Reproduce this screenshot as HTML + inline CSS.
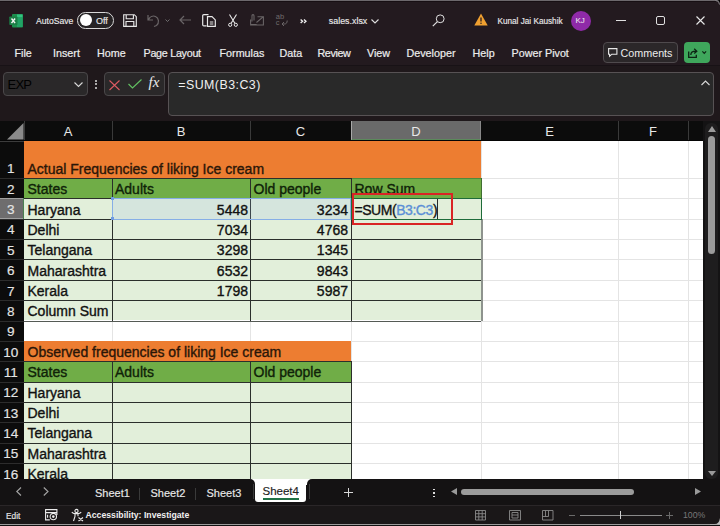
<!DOCTYPE html>
<html><head><meta charset="utf-8">
<style>
*{box-sizing:border-box;margin:0;padding:0}
html,body{width:720px;height:526px;overflow:hidden;background:#231a1f}
body{position:relative;font-family:"Liberation Sans",sans-serif;color:#e6e6e6}
.a{position:absolute}
.t{position:absolute;white-space:nowrap;line-height:1}
svg{position:absolute;overflow:visible}
</style></head><body>

<!-- top border -->
<div class="a" style="left:0;top:0;width:720px;height:1px;background:#6c686c"></div>
<div class="a" style="left:0;top:1px;width:720px;height:1px;background:#170f13"></div>
<svg style="left:712px;top:0" width="8" height="8" viewBox="0 0 8 8"><path d="M4 0H8V4Q8 0 4 0z" fill="#000"/><path d="M3.5 0.5Q7.5 0.5 7.5 4.5" fill="none" stroke="#8a868a" stroke-width="1"/></svg>

<!-- ===== TITLE BAR ===== -->
<svg style="left:9px;top:13.5px" width="14" height="13.5" viewBox="0 0 14 13.5">
<rect x="3" y="0" width="11" height="13.5" rx="1" fill="#1d8f4e"/>
<rect x="8" y="0.5" width="5.5" height="3" fill="#33c481"/>
<rect x="8" y="3.5" width="5.5" height="9.5" fill="#21a366"/>
<rect x="0.3" y="2.5" width="8.2" height="8.5" rx="0.8" fill="#1b7f46"/>
<path d="M2.5 4.5l3.6 4.6M6.1 4.5l-3.6 4.6" stroke="#f4f4f4" stroke-width="1.4"/>
</svg>
<div class="t" style="left:36px;top:16.8px;font-size:8.6px;color:#e8e8e8;-webkit-text-stroke:0.15px #e8e8e8">AutoSave</div>
<div class="a" style="left:77px;top:12px;width:36.5px;height:16.8px;border:1px solid #d8d8d8;border-radius:8.4px;background:#262325"></div>
<div class="a" style="left:79.8px;top:14px;width:12px;height:12px;background:#fff;border-radius:50%"></div>
<div class="t" style="left:96px;top:16.6px;font-size:9px;color:#e8e8e8;-webkit-text-stroke:0.15px #e8e8e8">Off</div>

<!-- save -->
<svg style="left:123.3px;top:14px" width="14" height="13" viewBox="0 0 14 13"><path d="M0.7 0.7h10.6l2 2v9.6h-12.6z M3.2 0.7v4h7.2v-4 M3 12.3v-4.8h7.8v4.8" fill="none" stroke="#e6e6e6" stroke-width="1.15"/></svg>
<!-- undo dim -->
<svg style="left:147px;top:14px" width="14" height="13" viewBox="0 0 14 13"><path d="M1 1v5h5 M1.5 5.5C3 2.5 6 1.5 8.5 2.5 12 4 12.5 9 9.5 11.5 L7 12.5" fill="none" stroke="#6a6567" stroke-width="1.2"/></svg>
<svg style="left:165px;top:19px" width="5" height="3" viewBox="0 0 5 3"><path d="M0.5 0.5l2 2 2-2" fill="none" stroke="#777" stroke-width="0.9"/></svg>
<!-- back arrow -->
<svg style="left:179px;top:15px" width="12" height="10" viewBox="0 0 12 10"><path d="M12 5H1 M5 1L1 5l4 4" fill="none" stroke="#6a6567" stroke-width="1.2"/></svg>
<!-- copy -->
<svg style="left:202px;top:14px" width="14" height="13" viewBox="0 0 14 13"><path d="M6.5 0.7H1.8Q0.7 0.7 0.7 1.8V10.7Q0.7 11.8 1.8 11.8H4.5 M5.5 2.6h4.5l3.3 3.3v6.4h-7.8z M7.8 8h3.5 M7.8 10h3.5" fill="none" stroke="#e8e8e8" stroke-width="1.2"/></svg>
<!-- scissors -->
<svg style="left:228px;top:14px" width="10" height="13" viewBox="0 0 10 13"><path d="M1.5 0.5L7 9.5 M8.5 0.5L3 9.5" fill="none" stroke="#e8e8e8" stroke-width="1.1"/><circle cx="2.2" cy="10.8" r="1.6" fill="none" stroke="#e8e8e8" stroke-width="1"/><circle cx="7.8" cy="10.8" r="1.6" fill="none" stroke="#e8e8e8" stroke-width="1"/></svg>
<!-- disabled format painter-ish -->
<svg style="left:249.5px;top:13.5px" width="14" height="11.5" viewBox="0 0 14 11.5"><path d="M0.6 5.5v5.4h12.8V2.8H7.5 M6.5 8.5L12.8 3.2 M2 7.5V1.8Q2 0.6 3 0.6T4 1.8V6.5 M0.6 10.5h6" fill="none" stroke="#6a6567" stroke-width="1.05"/></svg>
<!-- ab icon -->
<div class="t" style="left:275.8px;top:14px;font-size:7.5px;color:#6f6a6c;line-height:5.5px">ab<br>c</div>
<svg style="left:281px;top:19.5px" width="7" height="7" viewBox="0 0 7 7"><path d="M6.2 0.5c0 2.5-1 3.5-3 3.5H1 M3 2L1 4l2 2" fill="none" stroke="#6a6567" stroke-width="1"/></svg>
<svg style="left:300.3px;top:18.8px" width="7" height="4.6" viewBox="0 0 7 4.6"><path d="M0.6 0.5l2 1.8-2 1.8 M4 0.5l2 1.8-2 1.8" fill="none" stroke="#f0f0f0" stroke-width="1.3"/></svg>

<div class="t" style="left:328.8px;top:16.5px;font-size:8.9px;color:#e8e8e8;-webkit-text-stroke:0.15px #e8e8e8">sales.xlsx</div>
<svg style="left:371px;top:18.5px" width="8" height="5" viewBox="0 0 8 5"><path d="M0.5 0.5l3.5 3.5 3.5-3.5" fill="none" stroke="#e0e0e0" stroke-width="1.1"/></svg>

<!-- search -->
<svg style="left:432px;top:14px" width="13" height="13" viewBox="0 0 13 13"><circle cx="8.2" cy="4.8" r="3.9" fill="none" stroke="#e0e0e0" stroke-width="1"/><path d="M5.4 7.6L0.8 12.2" stroke="#e0e0e0" stroke-width="1.2"/></svg>
<!-- warning -->
<svg style="left:474px;top:13px" width="14" height="13" viewBox="0 0 14 13"><path d="M7 0.5L13.7 12.5H0.3z" fill="#f0a030"/><path d="M7 4.5v4" stroke="#221b1f" stroke-width="1.3"/><circle cx="7" cy="10.3" r="0.75" fill="#221b1f"/></svg>
<div class="t" style="left:497.5px;top:17.6px;font-size:8.2px;color:#e8e8e8;-webkit-text-stroke:0.15px #e8e8e8">Kunal Jai Kaushik</div>
<div class="a" style="left:571px;top:10.5px;width:20px;height:20px;border-radius:50%;background:#8f2aa8"></div>
<div class="t" style="left:575.5px;top:16.5px;font-size:8px;color:#f0f0f0">KJ</div>

<!-- window controls -->
<div class="a" style="left:616px;top:20px;width:10px;height:1px;background:#e0e0e0"></div>
<div class="a" style="left:656px;top:16px;width:9px;height:9px;border:1px solid #e0e0e0;border-radius:2px"></div>
<svg style="left:696px;top:16px" width="9" height="9" viewBox="0 0 9 9"><path d="M0.5 0.5l8 8M8.5 0.5l-8 8" stroke="#e8e8e8" stroke-width="1.1"/></svg>

<!-- ===== TABS ROW ===== -->
<div class="t" style="left:14.5px;top:48.3px;font-size:10.75px;color:#ececec;-webkit-text-stroke:0.2px #ececec">File</div>
<div class="t" style="left:53px;top:48.3px;font-size:10.75px;color:#ececec;-webkit-text-stroke:0.2px #ececec">Insert</div>
<div class="t" style="left:97px;top:48.3px;font-size:10.75px;color:#ececec;-webkit-text-stroke:0.2px #ececec">Home</div>
<div class="t" style="left:143.5px;top:48.3px;font-size:10.75px;letter-spacing:-0.28px;color:#ececec;-webkit-text-stroke:0.2px #ececec">Page Layout</div>
<div class="t" style="left:219.5px;top:48.3px;font-size:10.75px;color:#ececec;-webkit-text-stroke:0.2px #ececec">Formulas</div>
<div class="t" style="left:279.5px;top:48.3px;font-size:10.75px;color:#ececec;-webkit-text-stroke:0.2px #ececec">Data</div>
<div class="t" style="left:317.5px;top:48.3px;font-size:10.75px;letter-spacing:-0.4px;color:#ececec;-webkit-text-stroke:0.2px #ececec">Review</div>
<div class="t" style="left:367px;top:48.3px;font-size:10.75px;color:#ececec;-webkit-text-stroke:0.2px #ececec">View</div>
<div class="t" style="left:406.5px;top:48.3px;font-size:10.75px;color:#ececec;-webkit-text-stroke:0.2px #ececec">Developer</div>
<div class="t" style="left:472.5px;top:48.3px;font-size:10.75px;color:#ececec;-webkit-text-stroke:0.2px #ececec">Help</div>
<div class="t" style="left:511.5px;top:48.3px;font-size:10.75px;color:#ececec;-webkit-text-stroke:0.2px #ececec">Power Pivot</div>

<div class="a" style="left:603px;top:42px;width:75px;height:21px;border:1px solid #4f4a4d;border-radius:4px;background:#2b2729"></div>
<svg style="left:607.8px;top:47.8px" width="9.5" height="9" viewBox="0 0 9.5 9"><path d="M0.6 0.6h8.3v5.6H3.8L1.6 8.3V6.2H0.6z" fill="none" stroke="#e8e8e8" stroke-width="1.1"/></svg>
<div class="t" style="left:620.5px;top:47.9px;font-size:10.75px;color:#ececec">Comments</div>

<div class="a" style="left:684px;top:42px;width:26px;height:20.5px;border-radius:4px;background:#3fa75c"></div>
<svg style="left:688px;top:47.5px" width="10" height="10" viewBox="0 0 10 10"><path d="M0.7 3.5v5.8h7.6v-2.5 M2.8 7c0-2.6 2-3.8 5-3.8 M6.2 0.8l2.6 2.4-2.6 2.4" fill="none" stroke="#0d2414" stroke-width="1.3"/></svg>
<svg style="left:702px;top:51px" width="4.5" height="3" viewBox="0 0 4.5 3"><path d="M0.4 0.4l1.85 1.9 1.85-1.9" fill="none" stroke="#0d2414" stroke-width="1.2"/></svg>

<!-- separator -->
<div class="a" style="left:0;top:65px;width:720px;height:1px;background:#181216"></div>
<div class="a" style="left:0;top:66px;width:720px;height:55px;background:#1f181b"></div>

<!-- ===== FORMULA BAR ===== -->
<div class="a" style="left:3px;top:71.5px;width:84.5px;height:24.5px;border:1px solid #4a4749;border-radius:4px;background:#2a2829"></div>
<div class="t" style="left:7.5px;top:77.7px;font-size:13px;letter-spacing:-0.75px;color:#000">EXP</div>
<svg style="left:74px;top:82px" width="9" height="5" viewBox="0 0 9 5"><path d="M0.5 0.5l4 4 4-4" fill="none" stroke="#d8d8d8" stroke-width="1.1"/></svg>
<div class="a" style="left:95px;top:79.5px;width:2px;height:2px;background:#ddd;border-radius:1px"></div>
<div class="a" style="left:95px;top:83px;width:2px;height:2px;background:#ddd;border-radius:1px"></div>
<div class="a" style="left:95px;top:86.5px;width:2px;height:2px;background:#ddd;border-radius:1px"></div>

<div class="a" style="left:103.5px;top:71.5px;width:61.5px;height:24.5px;border:1px solid #4a4749;border-radius:4px;background:#2a2829"></div>
<svg style="left:109px;top:79.5px" width="11" height="10" viewBox="0 0 11 10"><path d="M0.5 0.5l10 9.5M10.5 0.5l-10 9.5" stroke="#de5a62" stroke-width="1.05"/></svg>
<svg style="left:127.5px;top:78.5px" width="14" height="10" viewBox="0 0 14 10"><path d="M0.5 5l4 4L13.5 0.5" fill="none" stroke="#62c062" stroke-width="1.15"/></svg>
<div class="t" style="left:148.5px;top:75px;font-size:15px;color:#ececec;font-family:'Liberation Serif',serif;font-style:italic">fx</div>

<div class="a" style="left:168px;top:72px;width:546px;height:44px;border:1px solid #575254;border-radius:4px;background:#292929"></div>
<div class="t" style="left:178.3px;top:78.5px;font-size:12.4px;letter-spacing:0.45px;color:#f0f0f0">=SUM(B3:C3)</div>
<svg style="left:701px;top:79.5px" width="9" height="5.5" viewBox="0 0 9 5.5"><path d="M0.5 5l4-4 4 4" fill="none" stroke="#dadada" stroke-width="1.1"/></svg>

<!-- ===== GRID ===== -->
<!-- scrollbar -->
<div class="a" style="left:703px;top:121px;width:17px;height:358px;background:#141314"></div>
<div class="a" style="left:0.00px;top:141.00px;width:703.00px;height:338.00px;background:#fff"></div>
<div class="a" style="left:112.00px;top:141.00px;width:1.00px;height:338.00px;background:#e4e4e4"></div>
<div class="a" style="left:250.00px;top:141.00px;width:1.00px;height:338.00px;background:#e4e4e4"></div>
<div class="a" style="left:351.00px;top:141.00px;width:1.00px;height:338.00px;background:#e4e4e4"></div>
<div class="a" style="left:481.00px;top:141.00px;width:1.00px;height:338.00px;background:#e4e4e4"></div>
<div class="a" style="left:618.00px;top:141.00px;width:1.00px;height:338.00px;background:#e4e4e4"></div>
<div class="a" style="left:688.00px;top:141.00px;width:1.00px;height:338.00px;background:#e4e4e4"></div>
<div class="a" style="left:24.00px;top:178.00px;width:679.00px;height:1.00px;background:#e4e4e4"></div>
<div class="a" style="left:24.00px;top:198.36px;width:679.00px;height:1.00px;background:#e4e4e4"></div>
<div class="a" style="left:24.00px;top:218.71px;width:679.00px;height:1.00px;background:#e4e4e4"></div>
<div class="a" style="left:24.00px;top:239.07px;width:679.00px;height:1.00px;background:#e4e4e4"></div>
<div class="a" style="left:24.00px;top:259.43px;width:679.00px;height:1.00px;background:#e4e4e4"></div>
<div class="a" style="left:24.00px;top:279.78px;width:679.00px;height:1.00px;background:#e4e4e4"></div>
<div class="a" style="left:24.00px;top:300.14px;width:679.00px;height:1.00px;background:#e4e4e4"></div>
<div class="a" style="left:24.00px;top:320.50px;width:679.00px;height:1.00px;background:#e4e4e4"></div>
<div class="a" style="left:24.00px;top:340.86px;width:679.00px;height:1.00px;background:#e4e4e4"></div>
<div class="a" style="left:24.00px;top:361.21px;width:679.00px;height:1.00px;background:#e4e4e4"></div>
<div class="a" style="left:24.00px;top:381.57px;width:679.00px;height:1.00px;background:#e4e4e4"></div>
<div class="a" style="left:24.00px;top:401.93px;width:679.00px;height:1.00px;background:#e4e4e4"></div>
<div class="a" style="left:24.00px;top:422.28px;width:679.00px;height:1.00px;background:#e4e4e4"></div>
<div class="a" style="left:24.00px;top:442.64px;width:679.00px;height:1.00px;background:#e4e4e4"></div>
<div class="a" style="left:24.00px;top:463.00px;width:679.00px;height:1.00px;background:#e4e4e4"></div>
<div class="a" style="left:24.00px;top:141.00px;width:457.00px;height:37.00px;background:#ed7d31"></div>
<div class="a" style="left:24.00px;top:178.00px;width:457.00px;height:20.36px;background:#70ad47"></div>
<div class="a" style="left:24.00px;top:198.36px;width:457.00px;height:122.14px;background:#e2efda"></div>
<div class="a" style="left:24.00px;top:340.86px;width:327.00px;height:20.36px;background:#ed7d31"></div>
<div class="a" style="left:24.00px;top:361.21px;width:327.00px;height:20.36px;background:#70ad47"></div>
<div class="a" style="left:24.00px;top:381.57px;width:327.00px;height:97.43px;background:#e2efda"></div>
<div class="a" style="left:24.00px;top:178.00px;width:327.00px;height:1.00px;background:#2b2f2b"></div>
<div class="a" style="left:24.00px;top:198.36px;width:457.00px;height:1.00px;background:#2b2f2b"></div>
<div class="a" style="left:24.00px;top:218.71px;width:457.00px;height:1.00px;background:#2b2f2b"></div>
<div class="a" style="left:24.00px;top:239.07px;width:457.00px;height:1.00px;background:#2b2f2b"></div>
<div class="a" style="left:24.00px;top:259.43px;width:457.00px;height:1.00px;background:#2b2f2b"></div>
<div class="a" style="left:24.00px;top:279.78px;width:457.00px;height:1.00px;background:#2b2f2b"></div>
<div class="a" style="left:24.00px;top:300.14px;width:457.00px;height:1.00px;background:#2b2f2b"></div>
<div class="a" style="left:351.00px;top:178.00px;width:130.00px;height:1.00px;background:#4e8a3c"></div>
<div class="a" style="left:24.00px;top:320.50px;width:457.00px;height:1.00px;background:#555a55"></div>
<div class="a" style="left:112.00px;top:178.00px;width:1.00px;height:142.50px;background:#2b2f2b"></div>
<div class="a" style="left:250.00px;top:178.00px;width:1.00px;height:142.50px;background:#2b2f2b"></div>
<div class="a" style="left:351.00px;top:178.00px;width:1.00px;height:142.50px;background:#2b2f2b"></div>
<div class="a" style="left:481.00px;top:178.00px;width:1.00px;height:20.36px;background:#3f6f30"></div>
<div class="a" style="left:481.00px;top:218.71px;width:1.50px;height:102.79px;background:#8e938e"></div>
<div class="a" style="left:24.00px;top:361.21px;width:327.00px;height:1.00px;background:#2b2f2b"></div>
<div class="a" style="left:24.00px;top:381.57px;width:327.00px;height:1.00px;background:#2b2f2b"></div>
<div class="a" style="left:24.00px;top:401.93px;width:327.00px;height:1.00px;background:#2b2f2b"></div>
<div class="a" style="left:24.00px;top:422.28px;width:327.00px;height:1.00px;background:#2b2f2b"></div>
<div class="a" style="left:24.00px;top:442.64px;width:327.00px;height:1.00px;background:#2b2f2b"></div>
<div class="a" style="left:24.00px;top:463.00px;width:327.00px;height:1.00px;background:#2b2f2b"></div>
<div class="a" style="left:112.00px;top:361.21px;width:1.00px;height:117.79px;background:#2b2f2b"></div>
<div class="a" style="left:250.00px;top:361.21px;width:1.00px;height:117.79px;background:#2b2f2b"></div>
<div class="a" style="left:351.00px;top:361.21px;width:1.00px;height:117.79px;background:#2b2f2b"></div>
<div class="a" style="left:112.00px;top:198.36px;width:239.00px;height:21.36px;background:rgba(150,185,240,0.17);border:1px solid #86aee6"></div>
<div class="a" style="left:110.50px;top:196.86px;width:3.00px;height:3.00px;background:#6f9be0"></div>
<div class="a" style="left:110.50px;top:217.21px;width:3.00px;height:3.00px;background:#6f9be0"></div>
<div class="a" style="left:351.00px;top:198.36px;width:131.00px;height:21.36px;border:1.5px solid #1e6b3a"></div>
<div class="a" style="left:0.00px;top:121.00px;width:703.00px;height:20.00px;background:#0c0c0c"></div>
<div class="a" style="left:351.00px;top:121.00px;width:130.00px;height:20.00px;background:#6a6a6a;border-left:1px solid #a8a8a8;border-right:1px solid #888;border-bottom:2px solid #5b8a5b"></div>
<div class="a" style="left:24.00px;top:121.00px;width:1.00px;height:20.00px;background:#3a3a3a"></div>
<div class="a" style="left:112.00px;top:121.00px;width:1.00px;height:20.00px;background:#3a3a3a"></div>
<div class="a" style="left:250.00px;top:121.00px;width:1.00px;height:20.00px;background:#3a3a3a"></div>
<div class="a" style="left:618.00px;top:121.00px;width:1.00px;height:20.00px;background:#3a3a3a"></div>
<div class="a" style="left:688.00px;top:121.00px;width:1.00px;height:20.00px;background:#3a3a3a"></div>
<div class="a" style="left:0.00px;top:140.00px;width:703.00px;height:1.00px;background:#050505"></div>
<svg style="left:6.7px;top:123.3px" width="16.5" height="16.5" viewBox="0 0 16.5 16.5"><path d="M16.5 0V16.5H0z" fill="#8a8a8a"/></svg>
<div class="t" style="left:24.00px;top:125.00px;width:88px;text-align:center;font-size:13px;color:#e8e8e8">A</div>
<div class="t" style="left:112.00px;top:125.00px;width:138px;text-align:center;font-size:13px;color:#e8e8e8">B</div>
<div class="t" style="left:250.00px;top:125.00px;width:101px;text-align:center;font-size:13px;color:#e8e8e8">C</div>
<div class="t" style="left:351.00px;top:125.00px;width:130px;text-align:center;font-size:13px;color:#e8e8e8">D</div>
<div class="t" style="left:481.00px;top:125.00px;width:137px;text-align:center;font-size:13px;color:#e8e8e8">E</div>
<div class="t" style="left:618.00px;top:125.00px;width:70px;text-align:center;font-size:13px;color:#e8e8e8">F</div>
<div class="a" style="left:0.00px;top:141.00px;width:24.00px;height:338.00px;background:#0c0c0c"></div>
<div class="a" style="left:0.00px;top:178.00px;width:24.00px;height:1.00px;background:#2c2c2c"></div>
<div class="a" style="left:0.00px;top:198.36px;width:24.00px;height:1.00px;background:#2c2c2c"></div>
<div class="a" style="left:0.00px;top:218.71px;width:24.00px;height:1.00px;background:#2c2c2c"></div>
<div class="a" style="left:0.00px;top:239.07px;width:24.00px;height:1.00px;background:#2c2c2c"></div>
<div class="a" style="left:0.00px;top:259.43px;width:24.00px;height:1.00px;background:#2c2c2c"></div>
<div class="a" style="left:0.00px;top:279.78px;width:24.00px;height:1.00px;background:#2c2c2c"></div>
<div class="a" style="left:0.00px;top:300.14px;width:24.00px;height:1.00px;background:#2c2c2c"></div>
<div class="a" style="left:0.00px;top:320.50px;width:24.00px;height:1.00px;background:#2c2c2c"></div>
<div class="a" style="left:0.00px;top:340.86px;width:24.00px;height:1.00px;background:#2c2c2c"></div>
<div class="a" style="left:0.00px;top:361.21px;width:24.00px;height:1.00px;background:#2c2c2c"></div>
<div class="a" style="left:0.00px;top:381.57px;width:24.00px;height:1.00px;background:#2c2c2c"></div>
<div class="a" style="left:0.00px;top:401.93px;width:24.00px;height:1.00px;background:#2c2c2c"></div>
<div class="a" style="left:0.00px;top:422.28px;width:24.00px;height:1.00px;background:#2c2c2c"></div>
<div class="a" style="left:0.00px;top:442.64px;width:24.00px;height:1.00px;background:#2c2c2c"></div>
<div class="a" style="left:0.00px;top:463.00px;width:24.00px;height:1.00px;background:#2c2c2c"></div>
<div class="a" style="left:0.00px;top:141.00px;width:24.00px;height:1.00px;background:#3c3c3c"></div>
<div class="a" style="left:0.00px;top:198.36px;width:24.00px;height:20.86px;background:#6e6d6e;border-top:1px solid #a0a0a0;border-bottom:1px solid #a0a0a0"></div>
<div class="a" style="left:23.00px;top:198.36px;width:1.20px;height:20.36px;background:#4a8050"></div>
<div class="t" style="left:0.00px;top:162.40px;width:21.5px;text-align:center;font-size:13.6px;color:#e4e4e4;-webkit-text-stroke:0.15px #e4e4e4">1</div>
<div class="t" style="left:0.00px;top:182.76px;width:21.5px;text-align:center;font-size:13.6px;color:#e4e4e4;-webkit-text-stroke:0.15px #e4e4e4">2</div>
<div class="t" style="left:0.00px;top:203.11px;width:21.5px;text-align:center;font-size:13.6px;color:#e4e4e4;-webkit-text-stroke:0.15px #e4e4e4">3</div>
<div class="t" style="left:0.00px;top:223.47px;width:21.5px;text-align:center;font-size:13.6px;color:#e4e4e4;-webkit-text-stroke:0.15px #e4e4e4">4</div>
<div class="t" style="left:0.00px;top:243.83px;width:21.5px;text-align:center;font-size:13.6px;color:#e4e4e4;-webkit-text-stroke:0.15px #e4e4e4">5</div>
<div class="t" style="left:0.00px;top:264.18px;width:21.5px;text-align:center;font-size:13.6px;color:#e4e4e4;-webkit-text-stroke:0.15px #e4e4e4">6</div>
<div class="t" style="left:0.00px;top:284.54px;width:21.5px;text-align:center;font-size:13.6px;color:#e4e4e4;-webkit-text-stroke:0.15px #e4e4e4">7</div>
<div class="t" style="left:0.00px;top:304.90px;width:21.5px;text-align:center;font-size:13.6px;color:#e4e4e4;-webkit-text-stroke:0.15px #e4e4e4">8</div>
<div class="t" style="left:0.00px;top:325.26px;width:21.5px;text-align:center;font-size:13.6px;color:#e4e4e4;-webkit-text-stroke:0.15px #e4e4e4">9</div>
<div class="t" style="left:0.00px;top:345.61px;width:21.5px;text-align:center;font-size:13.6px;color:#e4e4e4;-webkit-text-stroke:0.15px #e4e4e4">10</div>
<div class="t" style="left:0.00px;top:365.97px;width:21.5px;text-align:center;font-size:13.6px;color:#e4e4e4;-webkit-text-stroke:0.15px #e4e4e4">11</div>
<div class="t" style="left:0.00px;top:386.33px;width:21.5px;text-align:center;font-size:13.6px;color:#e4e4e4;-webkit-text-stroke:0.15px #e4e4e4">12</div>
<div class="t" style="left:0.00px;top:406.68px;width:21.5px;text-align:center;font-size:13.6px;color:#e4e4e4;-webkit-text-stroke:0.15px #e4e4e4">13</div>
<div class="t" style="left:0.00px;top:427.04px;width:21.5px;text-align:center;font-size:13.6px;color:#e4e4e4;-webkit-text-stroke:0.15px #e4e4e4">14</div>
<div class="t" style="left:0.00px;top:447.40px;width:21.5px;text-align:center;font-size:13.6px;color:#e4e4e4;-webkit-text-stroke:0.15px #e4e4e4">15</div>
<div class="t" style="left:0.00px;top:467.75px;width:21.5px;text-align:center;font-size:13.6px;color:#e4e4e4;-webkit-text-stroke:0.15px #e4e4e4">16</div>
<div class="t" style="left:27.50px;top:161.80px;font-size:14px;color:#111;-webkit-text-stroke:0.35px currentColor;color:#2a1608">Actual Frequencies of liking Ice cream</div>
<div class="t" style="left:27.50px;top:182.16px;font-size:14px;color:#111;-webkit-text-stroke:0.35px currentColor;color:#0f2208">States</div>
<div class="t" style="left:115.00px;top:182.16px;font-size:14px;color:#111;-webkit-text-stroke:0.35px currentColor;color:#0f2208">Adults</div>
<div class="t" style="left:253.50px;top:182.16px;font-size:14px;color:#111;-webkit-text-stroke:0.35px currentColor;color:#0f2208">Old people</div>
<div class="t" style="left:354.50px;top:182.16px;font-size:14px;color:#111;-webkit-text-stroke:0.35px currentColor;color:#0f2208">Row Sum</div>
<div class="t" style="left:27.50px;top:202.51px;font-size:14px;color:#111;-webkit-text-stroke:0.35px currentColor;">Haryana</div>
<div class="t" style="left:27.50px;top:222.87px;font-size:14px;color:#111;-webkit-text-stroke:0.35px currentColor;">Delhi</div>
<div class="t" style="left:27.50px;top:243.23px;font-size:14px;color:#111;-webkit-text-stroke:0.35px currentColor;">Telangana</div>
<div class="t" style="left:27.50px;top:263.58px;font-size:14px;color:#111;-webkit-text-stroke:0.35px currentColor;">Maharashtra</div>
<div class="t" style="left:27.50px;top:283.94px;font-size:14px;color:#111;-webkit-text-stroke:0.35px currentColor;">Kerala</div>
<div class="t" style="left:27.50px;top:304.30px;font-size:14px;color:#111;-webkit-text-stroke:0.35px currentColor;">Column Sum</div>
<div class="t" style="left:112.00px;top:202.51px;font-size:14px;color:#111;-webkit-text-stroke:0.35px currentColor;width:136px;text-align:right">5448</div>
<div class="t" style="left:250.00px;top:202.51px;font-size:14px;color:#111;-webkit-text-stroke:0.35px currentColor;width:98px;text-align:right">3234</div>
<div class="t" style="left:112.00px;top:222.87px;font-size:14px;color:#111;-webkit-text-stroke:0.35px currentColor;width:136px;text-align:right">7034</div>
<div class="t" style="left:250.00px;top:222.87px;font-size:14px;color:#111;-webkit-text-stroke:0.35px currentColor;width:98px;text-align:right">4768</div>
<div class="t" style="left:112.00px;top:243.23px;font-size:14px;color:#111;-webkit-text-stroke:0.35px currentColor;width:136px;text-align:right">3298</div>
<div class="t" style="left:250.00px;top:243.23px;font-size:14px;color:#111;-webkit-text-stroke:0.35px currentColor;width:98px;text-align:right">1345</div>
<div class="t" style="left:112.00px;top:263.58px;font-size:14px;color:#111;-webkit-text-stroke:0.35px currentColor;width:136px;text-align:right">6532</div>
<div class="t" style="left:250.00px;top:263.58px;font-size:14px;color:#111;-webkit-text-stroke:0.35px currentColor;width:98px;text-align:right">9843</div>
<div class="t" style="left:112.00px;top:283.94px;font-size:14px;color:#111;-webkit-text-stroke:0.35px currentColor;width:136px;text-align:right">1798</div>
<div class="t" style="left:250.00px;top:283.94px;font-size:14px;color:#111;-webkit-text-stroke:0.35px currentColor;width:98px;text-align:right">5987</div>
<div class="t" style="left:27.50px;top:345.01px;font-size:14px;color:#111;-webkit-text-stroke:0.35px currentColor;color:#2a1608">Observed frequencies of liking Ice cream</div>
<div class="t" style="left:27.50px;top:365.37px;font-size:14px;color:#111;-webkit-text-stroke:0.35px currentColor;color:#0f2208">States</div>
<div class="t" style="left:115.00px;top:365.37px;font-size:14px;color:#111;-webkit-text-stroke:0.35px currentColor;color:#0f2208">Adults</div>
<div class="t" style="left:253.50px;top:365.37px;font-size:14px;color:#111;-webkit-text-stroke:0.35px currentColor;color:#0f2208">Old people</div>
<div class="t" style="left:27.50px;top:385.73px;font-size:14px;color:#111;-webkit-text-stroke:0.35px currentColor;">Haryana</div>
<div class="t" style="left:27.50px;top:406.08px;font-size:14px;color:#111;-webkit-text-stroke:0.35px currentColor;">Delhi</div>
<div class="t" style="left:27.50px;top:426.44px;font-size:14px;color:#111;-webkit-text-stroke:0.35px currentColor;">Telangana</div>
<div class="t" style="left:27.50px;top:446.80px;font-size:14px;color:#111;-webkit-text-stroke:0.35px currentColor;">Maharashtra</div>
<div class="t" style="left:27.50px;top:467.16px;font-size:14px;color:#111;-webkit-text-stroke:0.35px currentColor;">Kerala</div>
<div class="t" style="left:354.50px;top:202.51px;font-size:14px;color:#111;-webkit-text-stroke:0.35px currentColor;letter-spacing:-0.45px">=SUM(<span style="color:#5b8fd6">B3:C3</span>)</div>
<div class="a" style="left:437.20px;top:198.86px;width:1.00px;height:20.00px;background:#2a2a2a"></div>
<div class="a" style="left:351.50px;top:193.20px;width:101.00px;height:32.00px;border:2.8px solid #d92424"></div>
<div class="a" style="left:705px;top:122.5px;width:13px;height:356px;border-radius:6px;background:#1e1d1e"></div>
<svg style="left:708px;top:126px" width="8" height="6" viewBox="0 0 8 6"><path d="M4 0L8 6H0z" fill="#9a9a9a"/></svg>
<div class="a" style="left:708px;top:136px;width:7px;height:118px;border-radius:3.5px;background:#9b9b9b"></div>
<svg style="left:708px;top:471px" width="8" height="5" viewBox="0 0 8 5"><path d="M0 0H8L4 5z" fill="#9a9a9a"/></svg>


<!-- ===== SHEET TABS ===== -->
<div class="a" style="left:0;top:479px;width:720px;height:26px;background:#141213"></div>
<div class="a" style="left:0;top:505px;width:720px;height:1px;background:#2a2628"></div>
<svg style="left:15.5px;top:487.3px" width="6" height="9" viewBox="0 0 6 9"><path d="M5 0.5L0.8 4.5 5 8.5" fill="none" stroke="#a2a2a2" stroke-width="1.15"/></svg>
<svg style="left:42.5px;top:487.3px" width="6" height="9" viewBox="0 0 6 9"><path d="M0.8 0.5L5 4.5 0.8 8.5" fill="none" stroke="#a2a2a2" stroke-width="1.15"/></svg>
<div class="t" style="left:95px;top:487.5px;font-size:11px;letter-spacing:0px;color:#e8e8e8;-webkit-text-stroke:0.15px #e8e8e8">Sheet1</div>
<div class="a" style="left:139px;top:488px;width:1px;height:12px;background:#3a3a3a"></div>
<div class="t" style="left:150.5px;top:487.5px;font-size:11px;letter-spacing:0px;color:#e8e8e8;-webkit-text-stroke:0.15px #e8e8e8">Sheet2</div>
<div class="a" style="left:195px;top:488px;width:1px;height:12px;background:#3a3a3a"></div>
<div class="t" style="left:206.5px;top:487.5px;font-size:11px;letter-spacing:0px;color:#e8e8e8;-webkit-text-stroke:0.15px #e8e8e8">Sheet3</div>
<div class="a" style="left:249px;top:479px;width:64px;height:6px;background:#fff"></div>
<div class="a" style="left:245px;top:479px;width:10.4px;height:26px;background:#141213;border-top-right-radius:5px"></div>
<div class="a" style="left:306.5px;top:479px;width:14px;height:26px;background:#141213;border-top-left-radius:5px"></div>
<div class="a" style="left:255.4px;top:479px;width:51.1px;height:23.1px;background:#fff;border-radius:0 0 3px 3px"></div>
<div class="a" style="left:252.5px;top:484px;width:1px;height:15px;background:#3a3a3a"></div>
<div class="t" style="left:262.5px;top:485.5px;font-size:11.5px;color:#222;-webkit-text-stroke:0.15px #222">Sheet4</div>
<div class="a" style="left:262.7px;top:498.2px;width:36px;height:1.7px;background:#1e7145"></div>
<div class="a" style="left:309px;top:484px;width:1px;height:15px;background:#3a3a3a"></div>
<svg style="left:344px;top:487.5px" width="9" height="9" viewBox="0 0 9 9"><path d="M4.5 0v9M0 4.5h9" stroke="#d8d8d8" stroke-width="1"/></svg>
<div class="a" style="left:433px;top:488.5px;width:1.5px;height:1.5px;background:#ddd"></div>
<div class="a" style="left:433px;top:492px;width:1.5px;height:1.5px;background:#ddd"></div>
<div class="a" style="left:433px;top:495.5px;width:1.5px;height:1.5px;background:#ddd"></div>
<svg style="left:451px;top:488px" width="6" height="7" viewBox="0 0 6 7"><path d="M6 0V7L0 3.5z" fill="#9a9a9a"/></svg>
<div class="a" style="left:461px;top:488.5px;width:172.5px;height:6.5px;border-radius:3.25px;background:#9b9b9b"></div>
<svg style="left:694.5px;top:488px" width="6" height="7" viewBox="0 0 6 7"><path d="M0 0V7L6 3.5z" fill="#9a9a9a"/></svg>

<div class="a" style="left:0;top:506px;width:720px;height:18px;background:#1a1718"></div>
<div class="t" style="left:6px;top:511.6px;font-size:8.3px;color:#e8e8e8;-webkit-text-stroke:0.15px #e8e8e8">Edit</div>
<svg style="left:44.7px;top:509.2px" width="12.5" height="11.5" viewBox="0 0 12.5 11.5"><path d="M0.6 0.6h11.3v3h-11.3z M0.6 3.6v7.3h4.2 M11.9 3.6v2.4 M2.6 5.8v3" fill="none" stroke="#ececec" stroke-width="1.1"/><circle cx="8.3" cy="7.6" r="3.2" fill="#1a1718" stroke="#ececec" stroke-width="1.1"/><circle cx="8.3" cy="7.6" r="1.3" fill="#ececec"/></svg>
<svg style="left:71px;top:508.5px" width="13" height="12.5" viewBox="0 0 13 12.5"><circle cx="5.5" cy="2" r="1.6" fill="none" stroke="#ececec" stroke-width="1.1"/><path d="M0.8 3.2Q2 4.6 4 4.6H7Q9 4.6 10.2 3.2 M4 4.6V7.5L2.5 12 M7 4.6V7.2 M7.5 8.5l4.5 3.5 M12 8.5l-4.5 3.5" fill="none" stroke="#ececec" stroke-width="1.1"/></svg>
<div class="t" style="left:85.5px;top:510.5px;font-size:8.7px;color:#f0f0f0;font-weight:bold">Accessibility: Investigate</div>
<svg style="left:475px;top:509.5px" width="11" height="10.5" viewBox="0 0 11 10.5"><path d="M0.5 0.5h10v9.5h-10z M3.8 0.5v9.5 M7.2 0.5v9.5 M0.5 3.7h10 M0.5 6.9h10" fill="none" stroke="#8a8a8a" stroke-width="0.9"/></svg>
<svg style="left:508.5px;top:509.5px" width="12" height="10.5" viewBox="0 0 12 10.5"><path d="M0.5 0.5h11v9.5h-11z M3 2.5h6v5.5h-6z M3 5h6" fill="none" stroke="#8a8a8a" stroke-width="0.9"/></svg>
<svg style="left:542px;top:509.5px" width="11.5" height="10.5" viewBox="0 0 11.5 10.5"><path d="M0.5 0.5h10.5v9.5h-10.5z M0.5 6.5h6v-6 M3.5 0.5v6" fill="none" stroke="#8a8a8a" stroke-width="0.9"/></svg>
<div class="a" style="left:569px;top:514.5px;width:6px;height:1px;background:#6a6a6a"></div>
<div class="a" style="left:579.5px;top:514.5px;width:82.5px;height:1.5px;background:#8a8a8a"></div>
<div class="a" style="left:620px;top:511px;width:1.2px;height:8px;background:#d0d0d0"></div>
<svg style="left:665.5px;top:511.5px" width="7" height="7" viewBox="0 0 7 7"><path d="M3.5 0v7M0 3.5h7" stroke="#6a6a6a" stroke-width="1"/></svg>
<div class="t" style="left:683px;top:510.5px;font-size:8.7px;color:#787878">100%</div>
<div class="a" style="left:0;top:524px;width:720px;height:1px;background:#9a9a9a"></div>
<div class="a" style="left:0;top:525px;width:720px;height:1px;background:#111"></div>
<svg style="left:710px;top:516px" width="10" height="9" viewBox="0 0 10 9"><path d="M10 2V8.5H0V8H5Q9 8 10 2z" fill="#bdbdbd"/></svg>

</body></html>
